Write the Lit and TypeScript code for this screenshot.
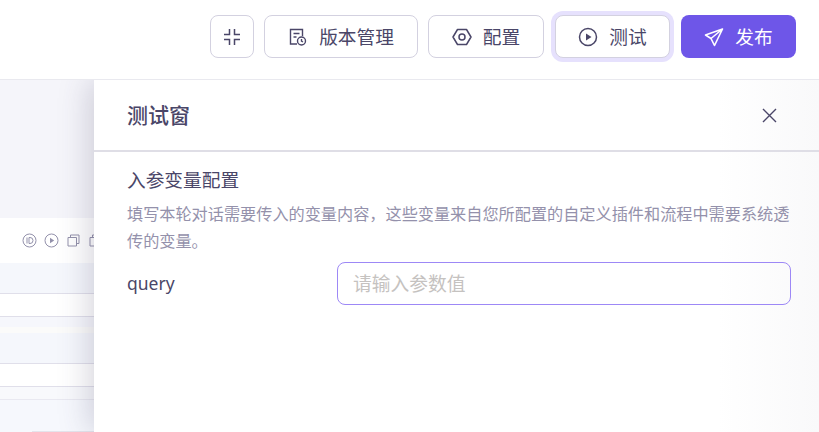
import { LitElement, html, css } from "lit";
import { customElement } from "lit/decorators.js";

@customElement("app-root")
export class AppRoot extends LitElement {
  static styles = css`
    :host {
      display: block;
      width: 819px;
      height: 432px;
      overflow: hidden;
      background: #fff;
      font-family: "Noto Sans CJK SC", "Noto Sans", sans-serif;
      color: #4a4668;
    }
    svg {
      display: block;
      flex: none;
      fill: none;
      stroke: currentColor;
    }

    .topbar {
      height: 80px;
      box-sizing: border-box;
      border-bottom: 1px solid #e9e9ef;
      display: flex;
      justify-content: flex-end;
      align-items: flex-start;
      gap: 10px;
      padding: 15px 23px 0 0;
    }
    .btn {
      height: 43px;
      box-sizing: border-box;
      border: 1px solid #d3d1e0;
      border-radius: 8px;
      background: #fff;
      display: flex;
      align-items: center;
      justify-content: center;
      gap: 11px;
      font-size: 18.7px;
      color: #4a4668;
    }
    .btn span {
      margin-bottom: 2px;
    }
    .btn.icon {
      width: 44px;
    }
    .btn.version {
      width: 154px;
    }
    .btn.config {
      width: 116px;
    }
    .btn.test {
      width: 115px;
      margin: 0 1px;
      box-shadow: 0 0 0 4px #e6e1fd;
    }
    .btn.publish {
      width: 115px;
      border: none;
      background: #6e56e8;
      color: #fff;
    }

    .stage {
      position: relative;
      height: 352px;
      overflow: hidden;
    }
    .backdrop {
      height: 100%;
      display: flex;
      flex-direction: column;
      background: #f6f8fd;
    }
    .band {
      flex: none;
    }
    .band.top {
      height: 138px;
      background: #f5f5fa;
    }
    .band.actions {
      height: 45px;
      background: #fff;
      display: flex;
      align-items: center;
      gap: 7px;
      padding-left: 22px;
      color: #9391ab;
    }
    .band.head {
      height: 30px;
      background: #f5f7fc;
    }
    .band.select {
      height: 24px;
      box-sizing: border-box;
      background: #fff;
      border-top: 1px solid #e0dfea;
      border-bottom: 1px solid #e0dfea;
      display: flex;
      align-items: center;
      justify-content: flex-end;
      padding-right: 9px;
      color: #bdbccb;
    }
    .band.gap {
      height: 10px;
      background: #f6f7fc;
    }
    .band.strip {
      height: 6px;
      background: #fbfbfa;
    }
    .band.tail {
      height: 12px;
      background: #f8f9fc;
      border-bottom: 1px solid #e9e9f1;
    }
    .band.rest {
      height: 31px;
      border-bottom: 1px solid #e4e4ec;
      margin-left: 32px;
    }

    .drawer {
      position: absolute;
      left: 94px;
      top: 0;
      right: 0;
      bottom: 0;
      background: linear-gradient(90deg, #fff 86%, #f9f9fa 100%);
      box-shadow: -4px 0 30px rgba(60, 56, 90, 0.22);
      display: flex;
      flex-direction: column;
    }
    .drawer-head {
      height: 72px;
      box-sizing: border-box;
      border-bottom: 2px solid #dfdee6;
      display: flex;
      align-items: center;
      justify-content: space-between;
      padding: 0 42px 0 33px;
      font-size: 21px;
      font-weight: 500;
      color: #4a4668;
    }
    .drawer-head span {
      margin-bottom: 2px;
    }
    .drawer-body {
      padding: 13px 28px 0 33px;
      display: flex;
      flex-direction: column;
    }
    .section-title {
      font-size: 18.7px;
      line-height: 28px;
      color: #4a4668;
    }
    .hint {
      margin-top: 7px;
      font-size: 16.17px;
      line-height: 27px;
      color: #9491ab;
    }
    .param {
      margin-top: 8px;
      display: grid;
      grid-template-columns: 210px 1fr;
      align-items: center;
    }
    .param-name {
      margin-bottom: 2px;
      font-size: 17.5px;
      color: #4a4668;
      font-family: "Noto Sans", sans-serif;
    }
    .param-input {
      height: 43px;
      box-sizing: border-box;
      border: 1px solid #9d88f6;
      border-radius: 8px;
      padding: 0 15px 2px;
      display: flex;
      align-items: center;
      font-size: 18.75px;
      color: #c5c2c0;
    }
  `;

  render() {
    return html`
      <div class="topbar">
        <div class="btn icon">
          <svg width="20" height="20" viewBox="0 0 20 20" stroke-width="1.5">
            <path d="M7.500 2v5.500H2M12.500 2v5.500H18M7.500 18v-5.500H2M12.500 18v-5.500H18" />
          </svg>
        </div>
        <div class="btn version">
          <svg width="20" height="20" viewBox="0 0 20 20" stroke-width="1.4">
            <path d="M9 17H2.500V2.500h12v6.500M5.500 6.500h6M5.500 10h3" />
            <circle cx="13.500" cy="14" r="4" />
            <path d="M13.500 12v2.200l1.500 .8" />
          </svg>
          <span>版本管理</span>
        </div>
        <div class="btn config">
          <svg width="20" height="20" viewBox="0 0 20 20" stroke-width="1.5">
            <path d="M5.500 2.500h9L19 10l-4.500 7.500h-9L1 10z" stroke-linejoin="round" />
            <circle cx="10" cy="10" r="3" />
          </svg>
          <span>配置</span>
        </div>
        <div class="btn test">
          <svg width="20" height="20" viewBox="0 0 20 20" stroke-width="1.5">
            <circle cx="10" cy="10" r="8.500" />
            <path d="M8 6.500v7l5.500-3.500z" fill="currentColor" stroke="none" />
          </svg>
          <span>测试</span>
        </div>
        <div class="btn publish">
          <svg width="20" height="20" viewBox="0 0 20 20" stroke-width="1.6">
            <path d="M18.500 2L1.500 8l5.500 3.500L10.500 18.500zM18.500 2L7 11.500" stroke-linejoin="round" />
          </svg>
          <span>发布</span>
        </div>
      </div>

      <div class="stage">
        <div class="backdrop">
          <div class="band top"></div>
          <div class="band actions">
            <svg width="15" height="15" viewBox="0 0 15 15">
              <circle cx="7.500" cy="7.500" r="6.500" />
              <path d="M5 4.500v6M7 4.500v6h1a3 3 0 0 0 0-6z" />
            </svg>
            <svg width="15" height="15" viewBox="0 0 15 15">
              <circle cx="7.500" cy="7.500" r="6.500" />
              <path d="M6 4.800v5.400l4.200-2.700z" fill="currentColor" stroke="none" />
            </svg>
            <svg width="15" height="15" viewBox="0 0 15 15">
              <path d="M2 4.500h8.500V13H2zM4.500 4.500V2H13v8.500h-2.500" />
            </svg>
            <svg width="15" height="15" viewBox="0 0 15 15">
              <path d="M2 4.500h8.500V13H2zM4.500 4.500V2H13v8.500h-2.500" />
            </svg>
          </div>
          <div class="band head"></div>
          <div class="band select">
            <svg width="10" height="6" viewBox="0 0 10 6"><path d="M1 1l4 4 4-4" /></svg>
          </div>
          <div class="band gap"></div>
          <div class="band strip"></div>
          <div class="band head"></div>
          <div class="band select">
            <svg width="10" height="6" viewBox="0 0 10 6"><path d="M1 1l4 4 4-4" /></svg>
          </div>
          <div class="band tail"></div>
          <div class="band rest"></div>
        </div>

        <div class="drawer">
          <div class="drawer-head">
            <span>测试窗</span>
            <svg width="15" height="15" viewBox="0 0 15 15" stroke-width="1.400">
              <path d="M1 1l13 13M14 1L1 14" />
            </svg>
          </div>
          <div class="drawer-body">
            <div class="section-title">入参变量配置</div>
            <div class="hint">
              填写本轮对话需要传入的变量内容，这些变量来自您所配置的自定义插件和流程中需要系统透传的变量。
            </div>
            <div class="param">
              <div class="param-name">query</div>
              <div class="param-input">请输入参数值</div>
            </div>
          </div>
        </div>
      </div>
    `;
  }
}

declare global {
  interface HTMLElementTagNameMap {
    "app-root": AppRoot;
  }
}
